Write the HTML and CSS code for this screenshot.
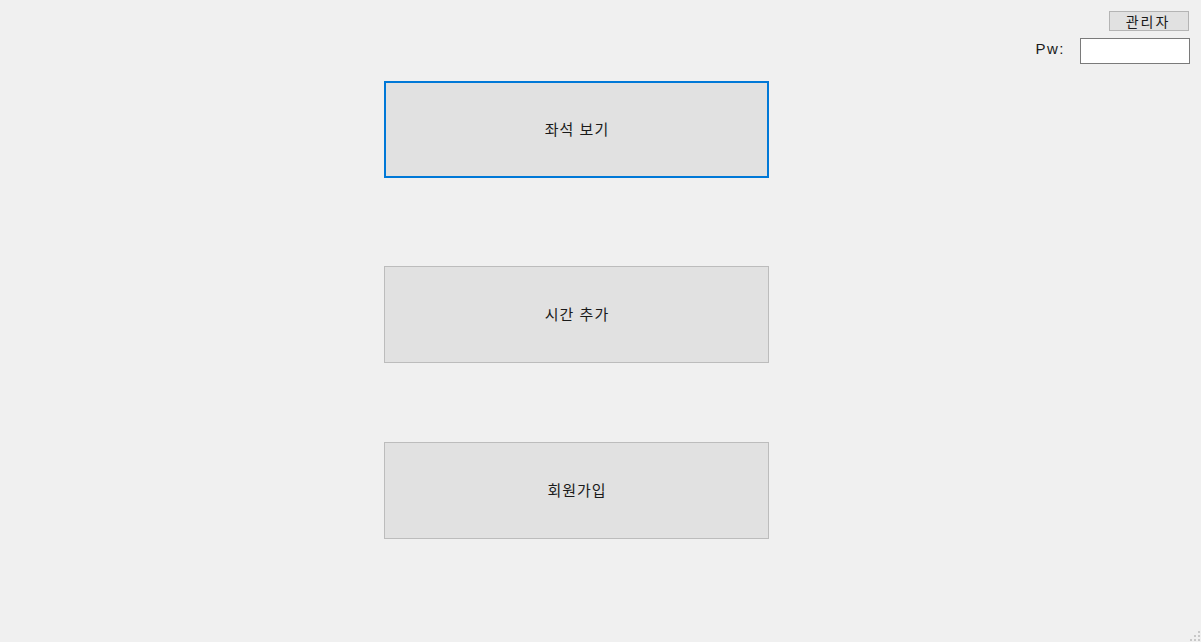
FILE: index.html
```html
<!DOCTYPE html>
<html lang="ko">
<head>
<meta charset="utf-8">
<link rel="stylesheet" href="styles.css">
</head>
<body>
<div class="window">
  <div class="top">
    <div class="admin">
      <button class="btn-admin">관리자</button>
      <div class="pw-row">
        <label class="pw-label" for="pw">Pw:</label>
        <input id="pw" class="pw-input" type="text">
      </div>
    </div>
  </div>
  <div class="menu">
    <button class="btn-menu focused">좌석 보기</button>
    <button class="btn-menu second">시간 추가</button>
    <button class="btn-menu third">회원가입</button>
  </div>
  <svg class="grip" width="12" height="12" viewBox="0 0 12 12">
    <rect x="9" y="1" width="2" height="2" fill="#c8c8c8"/>
    <rect x="5" y="5" width="2" height="2" fill="#c8c8c8"/>
    <rect x="9" y="5" width="2" height="2" fill="#c8c8c8"/>
    <rect x="1" y="9" width="2" height="2" fill="#c8c8c8"/>
    <rect x="5" y="9" width="2" height="2" fill="#c8c8c8"/>
    <rect x="9" y="9" width="2" height="2" fill="#c8c8c8"/>
  </svg>
</div>
</body>
</html>
```
FILE: styles.css
```css
html, body {
  margin: 0;
  padding: 0;
  background: #f0f0f0;
}
body {
  font-family: "Noto Sans CJK KR", "Noto Sans", sans-serif;
  color: #000;
}
.window {
  position: relative;
  width: 1201px;
  height: 642px;
  overflow: hidden;
}
.top {
  display: flex;
  justify-content: flex-end;
  padding: 11px 11px 0 0;
}
.admin {
  display: flex;
  flex-direction: column;
  align-items: flex-end;
}
.btn-admin {
  width: 80px;
  height: 20px;
  margin: 0 1px 0 0;
  padding: 0 2px 1px 0;
  background: #e1e1e1;
  border: 1px solid #b4b4b4;
  font-family: "Noto Sans CJK KR", sans-serif;
  font-size: 14px;
  letter-spacing: 2px;
  line-height: 16px;
  color: #1a1a1a;
}
.pw-row {
  display: flex;
  align-items: center;
  margin-top: 7px;
}
.pw-label {
  font-family: "Liberation Sans", "Noto Sans CJK KR", sans-serif;
  font-size: 15px;
  letter-spacing: 1.5px;
  margin-right: 15px;
  margin-top: -6px;
  color: #1a1a1a;
}
.pw-input {
  box-sizing: border-box;
  width: 110px;
  height: 26px;
  margin: 0;
  background: #fff;
  border: 1px solid #7a7a7a;
  padding: 0;
}
.menu {
  display: flex;
  flex-direction: column;
  margin: 17px 0 0 384px;
  width: 385px;
}
.btn-menu {
  box-sizing: border-box;
  width: 385px;
  height: 97px;
  margin: 0;
  padding: 0 0 2px 0;
  background: #e1e1e1;
  border: 1px solid #bcbcbc;
  font-family: "Noto Sans CJK KR", sans-serif;
  font-size: 15px;
  letter-spacing: 1px;
  text-indent: 1px;
  color: #1a1a1a;
}
.btn-menu.focused {
  border: 2px solid #0078d7;
}
.btn-menu.second {
  margin-top: 88px;
}
.btn-menu.third {
  margin-top: 79px;
}
.grip {
  position: absolute;
  right: 0;
  bottom: 0;
}
```
